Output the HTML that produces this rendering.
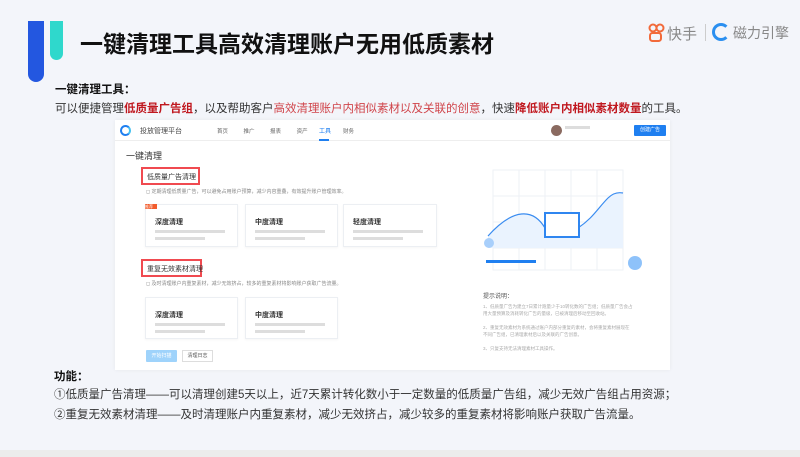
<!DOCTYPE html>
<html><head><meta charset="utf-8"><style>
*{margin:0;padding:0;box-sizing:border-box}
body{width:800px;height:457px;overflow:hidden;background:#f3f5fa;font-family:"Liberation Sans","Noto Sans CJK SC",sans-serif;position:relative;color:#333}
.a{position:absolute;white-space:nowrap}
.red{color:#c0181f;font-weight:bold}
.pink{color:#d0454b}
.card{position:absolute;background:#fff;border:1px solid #eceff3;box-shadow:0 1px 2px rgba(0,0,0,.04)}
.card b{position:absolute;left:9px;top:12px;font-size:7px;color:#333}
.card i{position:absolute;left:9px;top:25px;width:70px;height:3px;background:#ddd;font-style:normal}
.card i+i{top:32px;width:50px}
.rb{position:absolute;border:2px solid #f04a50;font-size:7px;padding:3px 4px;color:#333;height:18px}
</style></head><body>
<div class="a" style="left:0;top:450px;width:800px;height:7px;background:#ececec"></div>
<div class="a" style="left:28px;top:21px;width:16px;height:61px;background:#2357e0;border-radius:0 0 8px 8px"></div>
<div class="a" style="left:50px;top:21px;width:13px;height:39px;background:#2fd8cc;border-radius:0 0 7px 7px"></div>
<div class="a" style="left:80px;top:25px;font-size:23px;font-weight:bold;color:#111">一键清理工具高效清理账户无用低质素材</div>
<svg class="a" style="left:648px;top:23px" width="18" height="20"><circle cx="5" cy="5" r="3.5" fill="none" stroke="#f26a3a" stroke-width="2"/><circle cx="12" cy="5" r="3.5" fill="none" stroke="#f26a3a" stroke-width="2"/><rect x="2" y="10" width="11" height="8" rx="2.5" fill="none" stroke="#f26a3a" stroke-width="2"/></svg>
<div class="a" style="left:667px;top:23px;font-size:15px;color:#888">快手</div>
<div class="a" style="left:705px;top:24px;width:1px;height:17px;background:#ccc"></div>
<div class="a" style="left:712px;top:23px;width:18px;height:18px;border:3px solid #2a8ff0;border-right-color:transparent;border-radius:50%"></div>
<div class="a" style="left:733px;top:23px;font-size:14px;color:#888">磁力引擎</div>
<div class="a" style="left:55px;top:81px;font-size:11.5px;font-weight:bold;color:#111">一键清理工具：</div>
<div class="a" style="left:55px;top:100px;font-size:11.5px;color:#333">可以便捷管理<span class="red">低质量广告组</span>，以及帮助客户<span class="pink">高效清理账户内相似素材以及关联的创意</span>，快速<span class="red">降低账户内相似素材数量</span>的工具。</div>

<div class="a" style="left:115px;top:120px;width:555px;height:250px;background:#fff;box-shadow:0 0 4px rgba(0,0,0,.06)">
 <div class="a" style="left:0;top:0;width:555px;height:21px;border-bottom:1px solid #eee"></div>
 <div class="a" style="left:5px;top:5px;width:11px;height:11px;border:2.5px solid #1f7ff0;border-right-color:#43c0f0;border-radius:50%"></div>
 <div class="a" style="left:25px;top:6px;font-size:7px;color:#444">投放管理平台</div>
 <div class="a" style="left:102px;top:7px;font-size:5.5px;color:#666;word-spacing:14px">首页 推广 报表 资产</div>
 <div class="a" style="left:204px;top:6px;font-size:6px;color:#1f7ff0">工具</div>
 <div class="a" style="left:204px;top:19px;width:10px;height:2px;background:#1f7ff0"></div>
 <div class="a" style="left:228px;top:7px;font-size:5.5px;color:#666">财务</div>
 <div class="a" style="left:436px;top:5px;width:11px;height:11px;border-radius:50%;background:#8a6a60"></div>
 <div class="a" style="left:450px;top:6px;width:25px;height:3px;background:#ddd"></div>
 <div class="a" style="left:519px;top:5px;width:32px;height:11px;background:#1f7ff0;border-radius:1px;color:#fff;font-size:5px;text-align:center;line-height:11px">创建广告</div>
 <div class="a" style="left:11px;top:29px;font-size:9px;color:#333">一键清理</div>
 <div class="rb" style="left:26px;top:47px;width:59px">低质量广告清理</div>
 <div class="a" style="left:31px;top:68px;font-size:5px;color:#888">◻ 定期清理低质量广告，可以避免占用账户预算，减少内容重叠，有效提升账户管理效率。</div>
 <div class="card" style="left:30px;top:84px;width:93px;height:43px"><b>深度清理</b><i></i><i></i></div>
 <div class="a" style="left:30px;top:84px;width:12px;height:5px;background:#f25c2d;font-size:4px;color:#fff">推荐</div>
 <div class="card" style="left:130px;top:84px;width:93px;height:43px"><b>中度清理</b><i></i><i></i></div>
 <div class="card" style="left:228px;top:84px;width:94px;height:43px"><b>轻度清理</b><i></i><i></i></div>
 <div class="rb" style="left:26px;top:139px;width:61px">重复无效素材清理</div>
 <div class="a" style="left:31px;top:160px;font-size:5px;color:#888">◻ 及时清理账户内重复素材，减少无效挤占，较多的重复素材将影响账户获取广告流量。</div>
 <div class="card" style="left:30px;top:177px;width:93px;height:42px"><b>深度清理</b><i></i><i></i></div>
 <div class="card" style="left:130px;top:177px;width:93px;height:42px"><b>中度清理</b><i></i><i></i></div>
 <div class="a" style="left:31px;top:230px;width:31px;height:12px;background:#9fd3fb;border-radius:1px;color:#fff;font-size:5px;text-align:center;line-height:12px">开始扫描</div>
 <div class="a" style="left:67px;top:230px;width:31px;height:12px;border:1px solid #ddd;font-size:5px;text-align:center;line-height:10px;color:#555">清理日志</div>
 <svg class="a" style="left:368px;top:48px" width="160" height="110">
  <g stroke="#eef1f6" fill="none"><rect x="10" y="2" width="130" height="100"/><line x1="36" y1="2" x2="36" y2="102"/><line x1="62" y1="2" x2="62" y2="102"/><line x1="88" y1="2" x2="88" y2="102"/><line x1="114" y1="2" x2="114" y2="102"/><line x1="10" y1="28" x2="140" y2="28"/><line x1="10" y1="54" x2="140" y2="54"/><line x1="10" y1="80" x2="140" y2="80"/></g>
  <path d="M5 68 C30 40 50 40 62 60 L95 60 C110 50 115 40 125 30 C130 25 135 24 140 25 L140 80 L5 80Z" fill="#eaf3fe"/>
  <path d="M5 68 C30 40 50 40 62 60 M95 60 C110 50 115 40 125 30 C130 25 135 24 140 25" stroke="#3a8cf0" stroke-width="1.2" fill="none"/>
  <rect x="62" y="45" width="34" height="24" fill="#fff" stroke="#2f86f0" stroke-width="2"/>
  <circle cx="6" cy="75" r="5" fill="#a8cffb"/><circle cx="152" cy="95" r="7" fill="#8ec2fa"/>
  <rect x="3" y="92" width="50" height="3" fill="#1f7ff0"/>
 </svg>
 <div class="a" style="left:368px;top:171px;font-size:6px;color:#555">提示说明：</div>
 <div class="a" style="left:368px;top:183px;width:150px;white-space:normal;font-size:4.5px;line-height:7px;color:#aaa">1、低质量广告为建立7日累计跑量少于10转化数的广告组；低质量广告会占用大量预算及消耗转化广告的量级，已被清理后移动至回收站。<br><br>2、重复无效素材为系统通过账户内部分重复的素材，会将重复素材展现在不同广告组，已清理素材后以及关联的广告创意。<br><br>3、只复支持无法清理素材工具操作。</div>
</div>

<div class="a" style="left:54px;top:368px;font-size:11.5px;font-weight:bold;color:#111">功能：</div>
<div class="a" style="left:54px;top:386px;font-size:11.5px;color:#333">①低质量广告清理——可以清理创建5天以上，近7天累计转化数小于一定数量的低质量广告组，减少无效广告组占用资源；</div>
<div class="a" style="left:54px;top:406px;font-size:11.5px;color:#333">②重复无效素材清理——及时清理账户内重复素材，减少无效挤占，减少较多的重复素材将影响账户获取广告流量。</div>
</body></html>
